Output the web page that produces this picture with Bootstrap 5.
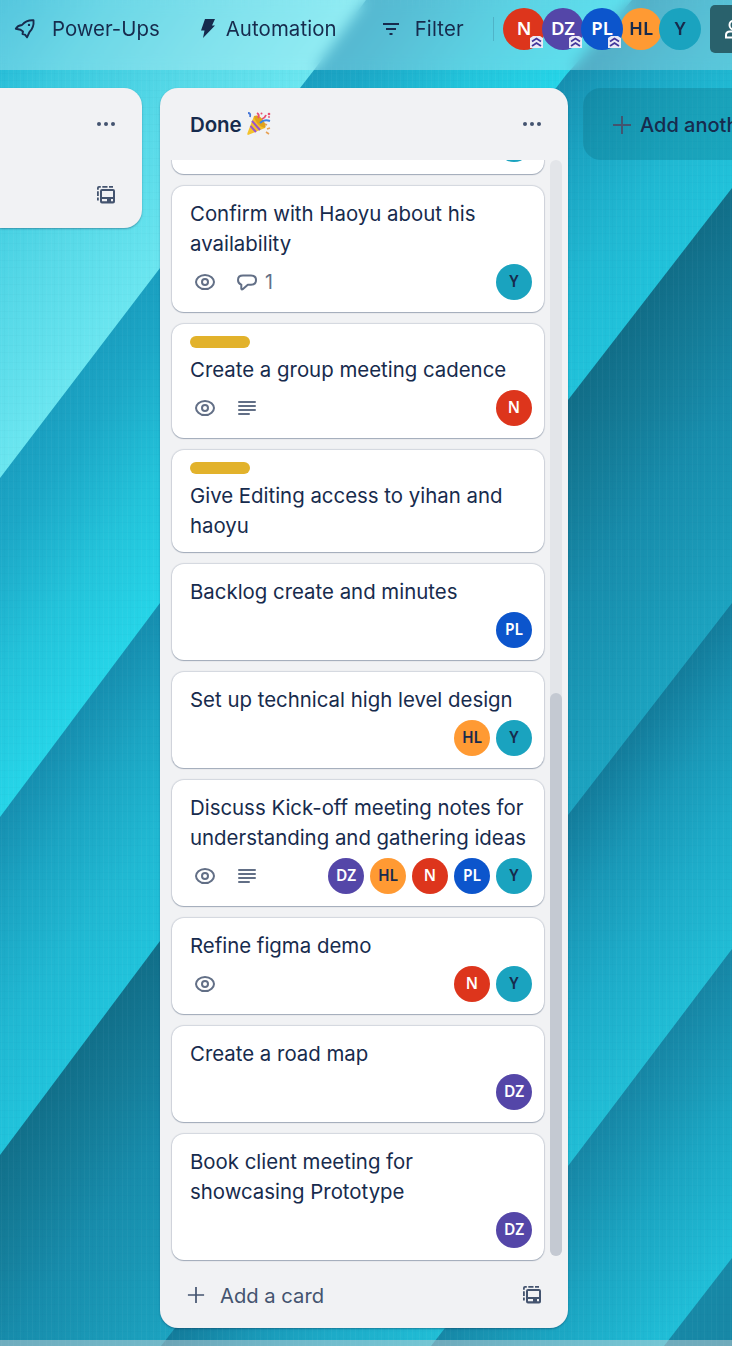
<!DOCTYPE html>
<html lang="en">
<head>
<meta charset="utf-8">
<meta name="viewport" content="width=device-width, initial-scale=1">
<title>Board</title>
<link rel="stylesheet" href="https://cdn.jsdelivr.net/npm/bootstrap@5.3.0/dist/css/bootstrap.min.css">
<style>
body{font-family:Inter,"Liberation Sans",sans-serif;font-size:20.4px;line-height:30px;color:#172b4d;height:1346px;background:#1b9fbf}
.backdrop{z-index:-1;width:732px;height:1346px}
.topbar{height:70px;background:rgba(255,255,255,.26);backdrop-filter:blur(7px);padding-bottom:13px}
.topbar svg,.topbar span{flex:none}
.avatar{width:36px;height:36px;font-family:"Noto Sans","Open Sans",sans-serif;font-size:15.5px;font-weight:600;line-height:1;flex:none}
.topbar .avatar{width:42px;height:42px;font-size:18.5px;margin-right:-3px}
.av-n{background:#dd351c;color:#fff}
.av-dz{background:#5446a8;color:#fff}
.av-pl{background:#0c55cc;color:#fff}
.av-hl{background:#ff9a33;color:#172b4d}
.av-y{background:#1aa3bf;color:#172b4d}
.rank{right:2px;bottom:2px;width:13px;height:12px}
.divider{width:1px;height:24px;background:rgba(23,43,77,.18)}
.share{width:60px;height:48px;background:#29616c;border-radius:5px;margin-right:-38px;padding-left:14px}
.board{gap:18px;padding-top:18px;height:1270px}
.board-list{background:#f1f2f4;border-radius:18px;box-shadow:0 1px 2px rgba(9,30,66,.35);flex:none;color:#44546f}
.list-prev{width:142px;height:140px;border-radius:0 18px 18px 0;padding:24px 26px 23px 0}
.list-done{width:408px;height:1240px}
.list-head{height:72px;padding:1px 26px 0 30px}
.list-name{font-size:20.5px;font-weight:600;color:#172b4d;letter-spacing:-.1px}
.scroller{height:1102px;padding:0 6px 0 12px;gap:6px}
.stack{width:372px;gap:12px;padding-bottom:2px}
.task{border:0;border-radius:12px;padding:13px 12px 12px 18px;flex:none;color:#172b4d;box-shadow:0 1px 1px rgba(9,30,66,.25),0 0 1px 1px rgba(9,30,66,.13)}
.task-title{white-space:nowrap}
.tag{width:60px;height:12px;border-radius:6px;background:#e2b22b;margin:-1px 0 7px}
.meta{height:36px;margin-top:5px;gap:6px;color:#626f86}
.meta svg{width:30px;height:30px;flex:none}
.meta svg + svg{margin-left:6px}
.count{margin-left:-3px;font-size:19.5px}
.track{width:12px;height:1096px;border-radius:6px;background:#e3e5e9}
.thumb{height:563px;border-radius:6px;background:#c4c9d2}
.list-foot{height:66px;padding:0 26px 0 27px}
.list-foot span{margin-left:15px;padding-top:1px;font-size:20.2px}
.add-list{width:300px;height:72px;margin-left:-3px;border-radius:18px;background:rgba(11,110,130,.3);padding:1px 0 0 29px;flex:none;font-size:20px;font-weight:500;white-space:nowrap}
.bottombar{height:6px;background:rgba(200,205,210,.5)}
</style>
</head>
<body class="position-relative overflow-hidden">
<svg class="backdrop position-absolute top-0 start-0" viewBox="0 0 732 1346" aria-hidden="true">
<defs>
<linearGradient id="g0" gradientUnits="userSpaceOnUse" x1="0" y1="0" x2="231" y2="177"><stop offset="0" stop-color="#18b2d2"/><stop offset=".3" stop-color="#38c9de"/><stop offset=".65" stop-color="#55d8e7"/><stop offset="1" stop-color="#6be6f0"/></linearGradient>
<linearGradient id="g1" gradientUnits="userSpaceOnUse" x1="231" y1="177" x2="394" y2="302"><stop offset="0" stop-color="#1a9fc0"/><stop offset=".2" stop-color="#1ca8c7"/><stop offset=".6" stop-color="#23c3da"/><stop offset="1" stop-color="#26d5e8"/></linearGradient>
<linearGradient id="g2" gradientUnits="userSpaceOnUse" x1="394" y1="302" x2="555" y2="425"><stop offset="0" stop-color="#168fb0"/><stop offset=".3" stop-color="#1ba5c3"/><stop offset=".65" stop-color="#20b8d2"/><stop offset="1" stop-color="#21c3db"/></linearGradient>
<linearGradient id="g3" gradientUnits="userSpaceOnUse" x1="550" y1="421" x2="752" y2="576"><stop offset="0" stop-color="#116d87"/><stop offset=".25" stop-color="#147c98"/><stop offset=".5" stop-color="#178cab"/><stop offset="1" stop-color="#1ca3c0"/></linearGradient>
<linearGradient id="g4" gradientUnits="userSpaceOnUse" x1="752" y1="576" x2="921" y2="705"><stop offset="0" stop-color="#137c9b"/><stop offset=".3" stop-color="#1998b7"/><stop offset=".6" stop-color="#1dabc8"/><stop offset="1" stop-color="#21bed6"/></linearGradient>
<linearGradient id="g5" gradientUnits="userSpaceOnUse" x1="921" y1="705" x2="1068" y2="819"><stop offset="0" stop-color="#1685a4"/><stop offset=".5" stop-color="#1ba5c2"/><stop offset="1" stop-color="#20bed7"/></linearGradient>
<pattern id="weave" width="19" height="17" patternUnits="userSpaceOnUse"><path d="M1.5 0v17M8.5 0v17M13.5 0v17" stroke="#fff" stroke-opacity=".03"/><path d="M4.5 0v17M16.5 0v17M0 5.5h19M0 12.5h19" stroke="#044a60" stroke-opacity=".02"/></pattern>
</defs>
<rect width="732" height="1346" fill="url(#g0)"/>
<path d="M366 0L314 70L160 268L0 478V1346H732V0Z" fill="url(#g1)"/>
<path d="M632 0L566 75L160 603L0 817V1346H732V0Z" fill="url(#g2)"/>
<path d="M732 188L568 400L160 941L0 1155V1346H732Z" fill="url(#g3)"/>
<path d="M732 603L568 815L175 1328L161 1346H732Z" fill="url(#g4)"/>
<path d="M732 949L568 1166L445 1328L431 1346H732Z" fill="url(#g5)"/>
<path d="M732 1258L664 1346H732Z" fill="#1788a6"/>
<rect width="732" height="1346" fill="url(#weave)"/>
</svg>

<svg class="d-none">
<symbol id="eye" viewBox="0 0 30 30"><path d="M15 7.900C9.500 7.900 6 12 6 15S9.500 22.100 15 22.100 24 18 24 15 20.500 7.900 15 7.900Z" fill="none" stroke="currentColor" stroke-width="2"/><circle cx="15" cy="15" r="3" fill="none" stroke="currentColor" stroke-width="2"/></symbol>
<symbol id="lines" viewBox="0 0 30 30"><path d="M7 9h16M7 13h16M7 17h16M7 21h10" stroke="currentColor" stroke-width="2" stroke-linecap="round"/></symbol>
<symbol id="talk" viewBox="0 0 30 30"><path d="M11 8.500H19C22.500 8.500 24 10.200 24 13S22.500 17.800 19 17.800H15.800L10.700 22.300C10 22.800 9.300 22.400 9.300 21.600V17.600C7 16.900 6 15.300 6 13 6 10.200 7.700 8.500 11 8.500Z" fill="none" stroke="currentColor" stroke-width="2" stroke-linejoin="round"/></symbol>
<symbol id="dots" viewBox="0 0 20 20"><circle cx="3" cy="10" r="2"/><circle cx="10" cy="10" r="2"/><circle cx="17" cy="10" r="2"/></symbol>
<symbol id="template" viewBox="0 0 20 20"><path d="M1.900 4.800V3Q1.900 1.900 3 1.900H4.800M6.300 1.900H11.500M13 1.900H17M1.900 6.200V11M1.900 12.500V15.500" fill="none" stroke="currentColor" stroke-width="1.800"/><path fill="currentColor" fill-rule="evenodd" d="M6 4H17Q19 4 19 6V16.500Q19 18.400 17 18.400H6Q4 18.400 4 16.500V6Q4 4 6 4ZM6 6V12H17V6ZM6 14V16.300H11V14ZM15 14V16.300H17V14Z"/></symbol>
<symbol id="plus" viewBox="0 0 20 20"><path d="M1 10h18M10 1v18" stroke="currentColor" stroke-width="1.900"/></symbol>
<symbol id="rank" viewBox="0 0 13 12"><path d="M0 2L3 0H10L13 2V12H0Z" fill="#ebe9f5"/><path d="M2 5.500L6.500 2.500L11 5.500M2 10L6.500 7L11 10" fill="none" stroke="#42369b" stroke-width="1.800"/></symbol>
</svg>

<header class="topbar d-flex align-items-center text-nowrap">
<svg width="24" height="24" viewBox="0 0 24 24" style="margin-left:13px"><path d="M9 8C12 4.500 16 3 20.500 3.300C21 8 19.500 12 16.500 15L14 20.300L12 17.600L9.500 17L10 14.500L7.500 12.700L2.800 11.800Q4.500 8.500 9 8Z" fill="none" stroke="currentColor" stroke-width="1.900" stroke-linejoin="round"/><circle cx="16" cy="7.900" r="1.200" fill="currentColor"/></svg>
<span style="margin-left:15px">Power-Ups</span>
<svg width="16" height="20" viewBox="0 0 16 20" style="margin-left:40px"><path d="M5 0H15L12 6.500H15L3 19L4.500 11.500H1Z" fill="currentColor"/></svg>
<span style="margin-left:10px;letter-spacing:.1px">Automation</span>
<svg width="18" height="14" viewBox="0 0 18 14" style="margin-left:45px"><path d="M1 2h16M4 7h10M7.500 12h3" stroke="currentColor" stroke-width="2"/></svg>
<span style="margin-left:15px;letter-spacing:.15px">Filter</span>
<div class="divider ms-auto"></div>
<div class="d-flex" style="margin:0 12px 0 9px">
<div class="avatar av-n rounded-circle d-flex align-items-center justify-content-center position-relative">N<svg class="rank position-absolute"><use href="#rank"/></svg></div>
<div class="avatar av-dz rounded-circle d-flex align-items-center justify-content-center position-relative">DZ<svg class="rank position-absolute"><use href="#rank"/></svg></div>
<div class="avatar av-pl rounded-circle d-flex align-items-center justify-content-center position-relative">PL<svg class="rank position-absolute"><use href="#rank"/></svg></div>
<div class="avatar av-hl rounded-circle d-flex align-items-center justify-content-center">HL</div>
<div class="avatar av-y rounded-circle d-flex align-items-center justify-content-center">Y</div>
</div>
<div class="share d-flex align-items-center flex-shrink-0"><svg width="22" height="24" viewBox="0 0 22 24"><circle cx="10" cy="8" r="4.500" fill="none" stroke="#fff" stroke-width="2"/><path d="M2 20.500V18Q2 14.500 6 14.500H14Q18 14.500 18 18V20.500Z" fill="none" stroke="#fff" stroke-width="2"/></svg></div>
</header>

<main class="board d-flex align-items-start">
<section class="board-list list-prev d-flex flex-column align-items-end justify-content-between">
<svg width="20" height="20" fill="currentColor" style="margin-top:2px"><use href="#dots"/></svg>
<svg width="20" height="20"><use href="#template"/></svg>
</section>

<section class="board-list list-done d-flex flex-column">
<div class="list-head d-flex align-items-center">
<span class="list-name">Done</span>
<svg width="24" height="24" viewBox="0 0 24 24" style="margin-left:5px;margin-top:-2px"><path d="M7 4L18 16L1 23Q0 23 .500 21Z" fill="#f4c22b"/><path d="M5 9L13 18M3.500 14L9 20" stroke="#9a55c9" stroke-width="2"/><path d="M7 4Q12 2 16 8T18 16Q13 15 10 11T7 4Z" fill="#e0a31c"/><path d="M13 11Q17 7 23 9" fill="none" stroke="#3c83e6" stroke-width="2"/><path d="M11 6Q13 3 10 1M15 7Q18 6 19 3" fill="none" stroke="#e94e72" stroke-width="1.800"/><path d="M1 1Q4 1 3 5" fill="none" stroke="#4777d8" stroke-width="1.800"/><g fill="#e94e72"><circle cx="22" cy="2" r="1.300"/><circle cx="14.500" cy="1.500" r="1"/><circle cx="22" cy="5" r=".900"/></g><path d="M18 12L20 13M20 17L23 16M19 20L22 22" stroke="#e7a154" stroke-width="1.600"/></svg>
<svg class="ms-auto" width="20" height="20" fill="currentColor" style="margin-top:-2px"><use href="#dots"/></svg>
</div>
<div class="scroller d-flex overflow-hidden">
<div class="stack d-flex flex-column justify-content-end">
<article class="card task"><div class="meta d-flex justify-content-end"><span class="avatar av-y rounded-circle"></span></div></article>
<article class="card task"><div class="task-title">Confirm with Haoyu about his<br>availability</div><div class="meta d-flex align-items-center"><svg><use href="#eye"/></svg><svg><use href="#talk"/></svg><span class="count">1</span><span class="avatar av-y rounded-circle d-flex align-items-center justify-content-center ms-auto">Y</span></div></article>
<article class="card task"><div class="tag"></div><div class="task-title">Create a group meeting cadence</div><div class="meta d-flex align-items-center"><svg><use href="#eye"/></svg><svg><use href="#lines"/></svg><span class="avatar av-n rounded-circle d-flex align-items-center justify-content-center ms-auto">N</span></div></article>
<article class="card task pb-2"><div class="tag"></div><div class="task-title mb-1">Give Editing access to yihan and<br>haoyu</div><div style="margin-top:-1px"></div></article>
<article class="card task"><div class="task-title">Backlog create and minutes</div><div class="meta d-flex align-items-center justify-content-end"><span class="avatar av-pl rounded-circle d-flex align-items-center justify-content-center">PL</span></div></article>
<article class="card task"><div class="task-title">Set up technical high level design</div><div class="meta d-flex align-items-center justify-content-end"><span class="avatar av-hl rounded-circle d-flex align-items-center justify-content-center">HL</span><span class="avatar av-y rounded-circle d-flex align-items-center justify-content-center">Y</span></div></article>
<article class="card task"><div class="task-title">Discuss Kick-off meeting notes for<br>understanding and gathering ideas</div><div class="meta d-flex align-items-center"><svg><use href="#eye"/></svg><svg><use href="#lines"/></svg><span class="avatar av-dz rounded-circle d-flex align-items-center justify-content-center ms-auto">DZ</span><span class="avatar av-hl rounded-circle d-flex align-items-center justify-content-center">HL</span><span class="avatar av-n rounded-circle d-flex align-items-center justify-content-center">N</span><span class="avatar av-pl rounded-circle d-flex align-items-center justify-content-center">PL</span><span class="avatar av-y rounded-circle d-flex align-items-center justify-content-center">Y</span></div></article>
<article class="card task"><div class="task-title">Refine figma demo</div><div class="meta d-flex align-items-center"><svg><use href="#eye"/></svg><span class="avatar av-n rounded-circle d-flex align-items-center justify-content-center ms-auto">N</span><span class="avatar av-y rounded-circle d-flex align-items-center justify-content-center">Y</span></div></article>
<article class="card task"><div class="task-title">Create a road map</div><div class="meta d-flex align-items-center justify-content-end"><span class="avatar av-dz rounded-circle d-flex align-items-center justify-content-center">DZ</span></div></article>
<article class="card task"><div class="task-title">Book client meeting for<br>showcasing Prototype</div><div class="meta d-flex align-items-center justify-content-end"><span class="avatar av-dz rounded-circle d-flex align-items-center justify-content-center">DZ</span></div></article>
</div>
<div class="track d-flex flex-column justify-content-end"><div class="thumb"></div></div>
</div>
<div class="list-foot d-flex align-items-center">
<svg width="18" height="18"><use href="#plus"/></svg><span>Add a card</span>
<svg class="ms-auto" width="20" height="20"><use href="#template"/></svg>
</div>
</section>

<section class="add-list d-flex align-items-center"><svg width="20" height="20" style="color:#44546f"><use href="#plus"/></svg><span style="margin-left:8px">Add another list</span></section>
</main>
<footer class="bottombar"></footer>
<script src="https://cdn.jsdelivr.net/npm/bootstrap@5.3.0/dist/js/bootstrap.bundle.min.js"></script>
</body>
</html>
